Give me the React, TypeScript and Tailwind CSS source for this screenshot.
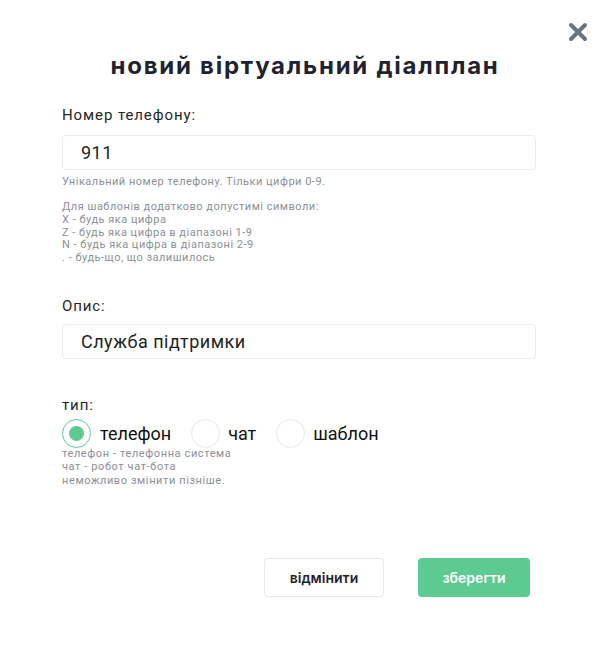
import React from "react";

export default function App() {
  return (
    <div className="relative w-[610px] h-[649px] bg-white" style={{ fontFamily: "Roboto, 'Liberation Sans', sans-serif" }}>
      <button className="absolute left-[566px] top-[20px] w-[24px] h-[24px] flex items-center justify-center">
        <svg width="20" height="20" viewBox="0 0 20 20">
          <path d="M3 3 L17 17 M17 3 L3 17" stroke="#6b7280" strokeWidth="4" strokeLinecap="round" />
        </svg>
      </button>
      <div className="flex flex-col px-[62px] pt-[48px]">
        <h1 className="text-center text-[24px] leading-[36px] font-bold tracking-[1.75px] text-[#1f2330]" style={{ fontFamily: "Inter, sans-serif" }}>
          новий віртуальний діалплан
        </h1>
        <label className="mt-[21px] text-[15px] leading-[20px] tracking-[0.9px] text-[#24262b]">Номер телефону:</label>
        <div className="mt-[10px] h-[35px] w-[474px] rounded-[4px] border border-[#ebecef] flex items-center pl-[18px] text-[18px] text-[#1d1f24] tracking-[0.5px]">
          911
        </div>
        <p className="mt-[5px] text-[11px] leading-[14px] tracking-[0.5px] text-[#8b8f98]">Унікальний номер телефону. Тільки цифри 0-9.</p>
        <div className="mt-[12px] text-[11px] leading-[12.8px] tracking-[0.5px] text-[#8b8f98]">
          <div>Для шаблонів додатково допустимі символи:</div>
          <div>X - будь яка цифра</div>
          <div>Z - будь яка цифра в діапазоні 1-9</div>
          <div>N - будь яка цифра в діапазоні 2-9</div>
          <div>. - будь-що, що залишилось</div>
        </div>
        <label className="mt-[31px] text-[15px] leading-[20px] tracking-[0.9px] text-[#24262b]">Опис:</label>
        <div className="mt-[8px] h-[35px] w-[474px] rounded-[4px] border border-[#ebecef] flex items-center pl-[18px] text-[18px] text-[#1d1f24] tracking-[0.5px]">
          Служба підтримки
        </div>
        <label className="mt-[36px] text-[15px] leading-[20px] tracking-[0.9px] text-[#24262b]">тип:</label>
        <div className="mt-[4px] flex items-center h-[30px]">
          <div className="w-[29px] h-[29px] rounded-full border border-[#5dca92] flex items-center justify-center">
            <div className="w-[15px] h-[15px] rounded-full bg-[#5dca92]" />
          </div>
          <span className="ml-[9px] text-[18px] text-[#111]">телефон</span>
          <div className="ml-[20px] w-[29px] h-[29px] rounded-full border border-[#e6e7ea]" />
          <span className="ml-[8px] text-[18px] text-[#111]">чат</span>
          <div className="ml-[20px] w-[29px] h-[29px] rounded-full border border-[#e6e7ea]" />
          <span className="ml-[8px] text-[18px] text-[#111]">шаблон</span>
        </div>
        <div className="-mt-[2px] text-[11px] leading-[13.5px] tracking-[0.6px] text-[#8b8f98]">
          <div>телефон - телефонна система</div>
          <div>чат - робот чат-бота</div>
          <div>неможливо змінити пізніше.</div>
        </div>
        <div className="mt-[71px] flex justify-end gap-[34px] pr-[18px]">
          <button className="w-[120px] h-[39px] rounded-[4px] border border-[#e6e7ea] bg-white text-[14px] font-semibold text-[#1f2330]" style={{ fontFamily: "Inter, sans-serif" }}>
            відмінити
          </button>
          <button className="w-[112px] h-[39px] rounded-[4px] bg-[#5dca92] text-[14px] font-semibold text-white" style={{ fontFamily: "Inter, sans-serif" }}>
            зберегти
          </button>
        </div>
      </div>
    </div>
  );
}
